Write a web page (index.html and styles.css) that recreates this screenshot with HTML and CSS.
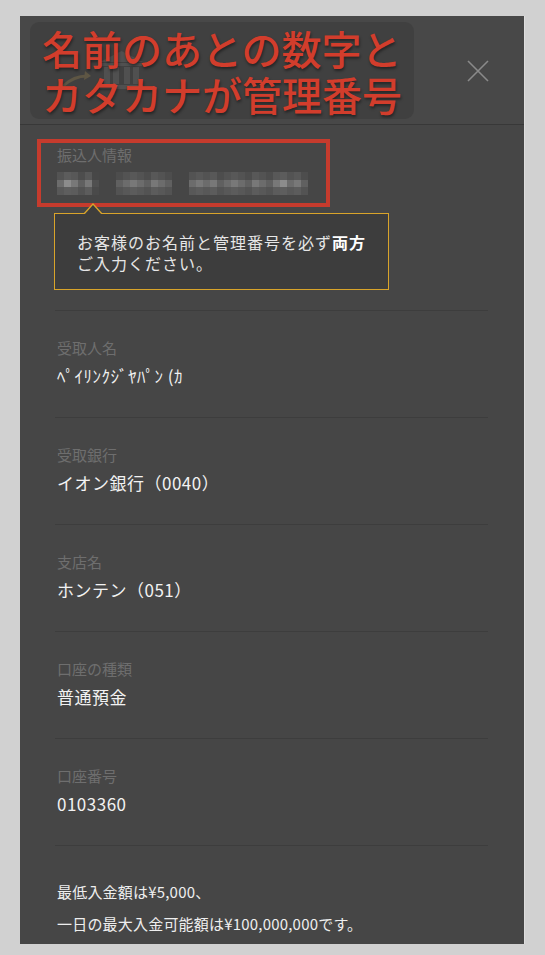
FILE: index.html
```html
<!DOCTYPE html>
<html lang="ja">
<head>
    <meta charset="UTF-8">
    <title>振込先情報</title>
    <link rel="stylesheet" href="styles.css">
</head>
<body>
    <div class="sheet">
        <div class="sheet-header">
            <svg class="bank-icon" width="86" height="40" viewBox="0 0 86 40">
                <!-- arrow into the bank -->
                <path d="M3 36 Q14 26 27 26" fill="none" stroke="#8a7850" stroke-width="3" stroke-linecap="round"/>
                <path d="M25 21 L31 26 L24 30 Z" fill="#8a7850"/>
                <!-- bank building -->
                <path d="M40 12 L61.5 1 L83 12 Z" fill="#6a6a6a"/>
                <rect x="41" y="13" width="41" height="3" fill="#6a6a6a"/>
                <rect x="44" y="17" width="6" height="17" fill="#6a6a6a"/>
                <rect x="53" y="17" width="6" height="17" fill="#6a6a6a"/>
                <rect x="64" y="17" width="6" height="17" fill="#6a6a6a"/>
                <rect x="73" y="17" width="6" height="17" fill="#6a6a6a"/>
                <rect x="40" y="35" width="43" height="4" fill="#6a6a6a"/>
            </svg>
            <svg class="close-icon" width="22" height="22" viewBox="0 0 22 22">
                <path d="M1 1 L21 21 M21 1 L1 21" stroke="#8a8a8a" stroke-width="1.6"/>
            </svg>
            <div class="note">名前のあとの数字と<br>カタカナが管理番号</div>
        </div>

        <div class="sheet-body">
            <div class="payer">
                <div class="label">振込人情報</div>
                <div class="blurred">
                    <span class="px p2"></span><span class="px p4"></span><span class="px p3"></span><span class="px p1"></span><span class="px p3"></span><span class="px p0"></span>
                    <span class="gap"></span>
                    <span class="px p1"></span><span class="px p2"></span><span class="px p3"></span><span class="px p2"></span><span class="px p1"></span><span class="px p3"></span><span class="px p2"></span><span class="px p1"></span>
                    <span class="gap"></span>
                    <span class="px p2"></span><span class="px p3"></span><span class="px p2"></span><span class="px p3"></span><span class="px p1"></span><span class="px p2"></span><span class="px p3"></span><span class="px p2"></span><span class="px p1"></span><span class="px p3"></span><span class="px p2"></span><span class="px p1"></span><span class="px p3"></span><span class="px p4"></span><span class="px p2"></span><span class="px p3"></span><span class="px p1"></span>
                </div>
                <div class="mark"></div>
                <div class="tip">お客様のお名前と管理番号を必ず<b>両方</b><br>ご入力ください。</div>
            </div>

            <div class="row">
                <div class="label">受取人名</div>
                <div class="value">ﾍﾟｲﾘﾝｸｼﾞﾔﾊﾟﾝ (ｶ</div>
            </div>
            <div class="row">
                <div class="label">受取銀行</div>
                <div class="value">イオン銀行（0040）</div>
            </div>
            <div class="row">
                <div class="label">支店名</div>
                <div class="value">ホンテン（051）</div>
            </div>
            <div class="row">
                <div class="label">口座の種類</div>
                <div class="value">普通預金</div>
            </div>
            <div class="row">
                <div class="label">口座番号</div>
                <div class="value">0103360</div>
            </div>
            <div class="row notes">
                <p>最低入金額は¥5,000、</p>
                <p>一日の最大入金可能額は¥100,000,000です。</p>
            </div>
        </div>
    </div>
</body>
</html>
```

FILE: styles.css
```css
body {
    margin: 0;
    padding: 16px 21px 0 20px;
    background-color: #d1d1d1;
    font-family: "Noto Sans CJK JP", "Noto Sans", sans-serif;
    color: #f0f0f0;
}

/* dark modal sheet */
.sheet {
    position: relative;
    width: 504px;
    height: 928px;
    overflow: hidden;
    background-color: #464646;
    box-shadow: 1px 0 0 #dedede;
}

.sheet-header {
    position: relative;
    height: 108px;
    display: flex;
    align-items: center;
    justify-content: space-between;
    padding: 0 35px 0 40px;
    background-color: #484848;
    border-bottom: 1px solid #383838;
}

.close-icon {
    margin-top: 1px;
}

/* red annotation pasted over the header */
.note {
    position: absolute;
    left: 10px;
    top: 6px;
    width: 384px;
    height: 97px;
    box-sizing: border-box;
    padding: 3px 0 0 12px;
    border-radius: 9px;
    background-color: rgba(58, 58, 58, 0.55);
    color: #d23d2c;
    font-size: 40px;
    font-weight: 500;
    line-height: 46px;
    white-space: nowrap;
    text-shadow: 1px 2px 3px rgba(0, 0, 0, 0.45);
}

.sheet-body {
    padding: 0 36px 0 35px;
}

.label {
    font-size: 15px;
    line-height: 20px;
    color: #6e6e6e;
    padding-left: 2px;
}

.value {
    margin-top: 6px;
    font-size: 17px;
    line-height: 24px;
    letter-spacing: 0.5px;
    color: #f2f2f2;
    padding-left: 2px;
}

/* payer block with the highlighted box and hint */
.payer {
    position: relative;
    padding: 20px 0 20px;
}

.blurred {
    display: flex;
    height: 23px;
    margin-top: 7px;
    padding-left: 2px;
}

.px {
    width: 7px;
    height: 23px;
}

.gap {
    width: 17px;
}

.p0 { background: linear-gradient(#474747 0 33%, #505050 33% 66%, #4a4a4a 66%); }
.p1 { background: linear-gradient(#4d4d4d 0 33%, #606060 33% 66%, #535353 66%); }
.p2 { background: linear-gradient(#535353 0 33%, #6c6c6c 33% 66%, #585858 66%); }
.p3 { background: linear-gradient(#585858 0 33%, #787878 33% 66%, #5c5c5c 66%); }
.p4 { background: linear-gradient(#5c5c5c 0 33%, #8c8c8c 33% 66%, #5e5e5e 66%); }

.mark {
    position: absolute;
    left: -18px;
    top: 14px;
    width: 293px;
    height: 68px;
    box-sizing: border-box;
    border: 4px solid #c63b2d;
}

.tip {
    position: relative;
    margin: 18px 0 0 -1px;
    width: 335px;
    height: 77px;
    box-sizing: border-box;
    padding: 18px 0 0 22px;
    border: 1px solid #d9a42a;
    background-color: #3d3d3d;
    font-size: 16px;
    line-height: 21px;
    letter-spacing: 1px;
    color: #e6e6e6;
}

.tip b {
    color: #fff;
}

.tip::before,
.tip::after {
    content: "";
    position: absolute;
    left: 28px;
    top: -11px;
    border: 10px solid transparent;
    border-top: 0;
    border-bottom: 11px solid #d9a42a;
}

.tip::after {
    left: 29px;
    top: -9px;
    border-width: 0 9px 10px;
    border-bottom-color: #3d3d3d;
}

.row {
    border-top: 1px solid #3d3d3d;
    padding: 27px 0 29px;
}

.notes {
    padding-top: 30px;
}

.notes p {
    margin: 0;
    font-size: 15px;
    line-height: 32px;
    letter-spacing: 0.2px;
    color: #eeeeee;
    padding-left: 2px;
}
```
